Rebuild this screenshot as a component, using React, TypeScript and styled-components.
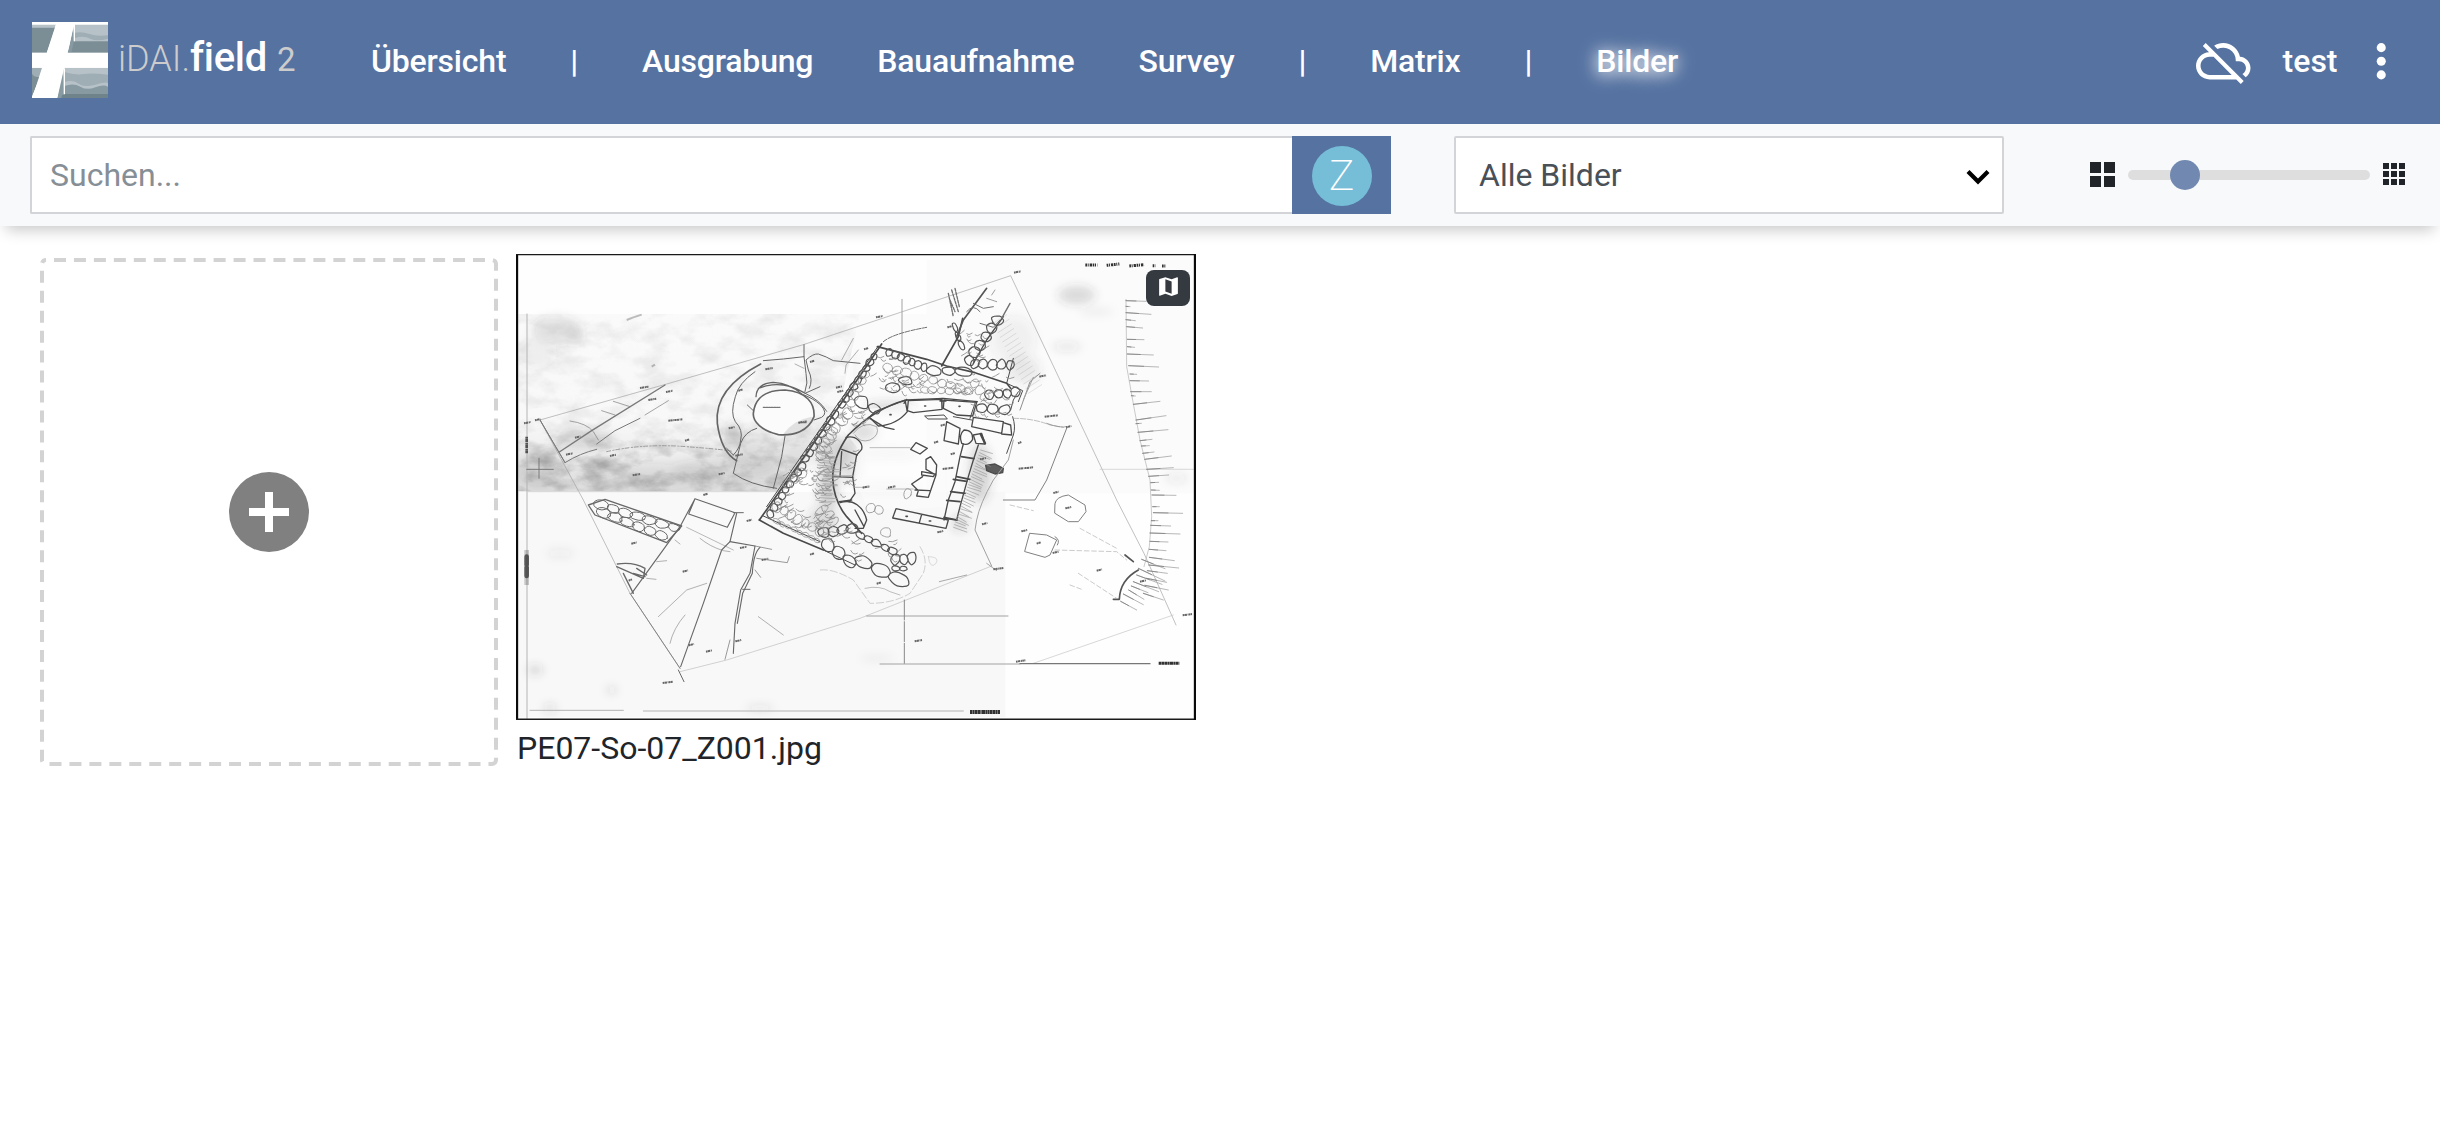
import React from 'react';
import styled, { createGlobalStyle } from 'styled-components';

const GlobalStyle = createGlobalStyle`
  * { box-sizing: border-box; }
  body {
    margin: 0;
    background: #ffffff;
    color: #212529;
    font-family: Roboto, 'Liberation Sans', sans-serif;
    font-size: 32px;
  }
`;

const Page = styled.div`
  min-height: 1148px;
  display: flex;
  flex-direction: column;
  overflow: hidden;
`;

/* ---------- navbar ---------- */

const Navbar = styled.header`
  height: 124px;
  display: flex;
  align-items: center;
  padding: 0 32px;
  background: #5572a1;
  color: #ffffff;
`;

const Brand = styled.div`
  width: 339px;
  display: flex;
  align-items: center;
  gap: 10px;
  padding-bottom: 4px;
`;

const LogoSvg = styled.svg`
  display: block;
  width: 76px;
  height: 76px;
`;

const BrandText = styled.div`
  height: 76px;
  line-height: 72px;
  white-space: nowrap;
  color: #cccccc;
`;

const BrandPart = styled.span<{ $size: number; $weight: number; $bright?: boolean; $gap?: number }>`
  font-size: ${(p) => p.$size}px;
  font-weight: ${(p) => p.$weight};
  color: ${(p) => (p.$bright ? '#ffffff' : '#cccccc')};
  margin-left: ${(p) => p.$gap ?? 0}px;
  letter-spacing: ${(p) => (p.$bright ? '-0.3px' : '0')};
  font-variant-ligatures: ${(p) => (p.$bright ? 'common-ligatures' : 'normal')};
`;

const Nav = styled.nav`
  display: flex;
  align-items: center;
  gap: 64px;
  padding-bottom: 2px;
  flex: 1;
`;

const NavItem = styled.span<{ $active?: boolean }>`
  font-size: 32px;
  font-weight: 500;
  letter-spacing: -0.2px;
  line-height: 48px;
  white-space: nowrap;
  text-shadow: ${(p) => (p.$active ? '0 2px 20px #ffffff, 0 2px 14px rgba(255,255,255,.6)' : 'none')};
`;

const NavRight = styled.div`
  display: flex;
  align-items: center;
  padding-bottom: 2px;
`;

const User = styled.span`
  font-weight: 500;
  line-height: 48px;
  margin: 0 16px 0 32px;
`;

const Icon = styled.svg<{ $size: number }>`
  display: block;
  flex: none;
  width: ${(p) => p.$size}px;
  height: ${(p) => p.$size}px;
  fill: currentColor;
`;

/* ---------- toolbar ---------- */

const Toolbar = styled.div`
  height: 102px;
  display: flex;
  align-items: center;
  padding: 0 35px 0 30px;
  background: #f8f9fb;
  box-shadow: 0 10px 14px -6px rgba(0, 0, 0, 0.22);
`;

const SearchGroup = styled.div`
  width: 1361px;
  height: 78px;
  display: flex;
`;

const SearchInput = styled.input`
  flex: 1;
  height: 78px;
  padding: 0 18px;
  border: 2px solid #d2d4d7;
  border-right: 0;
  border-radius: 2px 0 0 2px;
  background: #ffffff;
  font: 400 32px Roboto, 'Liberation Sans', sans-serif;
  outline: none;
  &::placeholder { color: #868e96; opacity: 1; }
`;

const CategoryButton = styled.button`
  width: 99px;
  height: 78px;
  display: flex;
  align-items: center;
  justify-content: center;
  padding: 0;
  border: 0;
  background: #5572a1;
`;

const CategoryBadge = styled.span`
  width: 60px;
  height: 60px;
  margin-top: 2px;
  border-radius: 50%;
  background: #76bdd7;
  color: #ffffff;
  font: 200 43px/58px Roboto, 'Liberation Sans', sans-serif;
  text-align: center;
`;

const Select = styled.div`
  width: 550px;
  height: 78px;
  margin-left: 63px;
  padding: 0 12px 0 23px;
  display: flex;
  align-items: center;
  justify-content: space-between;
  border: 2px solid #d2d4d7;
  border-radius: 2px;
  background: #ffffff;
  color: #495057;
`;

const Chevron = styled.svg`
  display: block;
  width: 24px;
  height: 16px;
  margin-top: 3px;
`;

const SizeControl = styled.div`
  flex: 1;
  display: flex;
  align-items: center;
  justify-content: flex-end;
  gap: 13px;
`;

const Tiles = styled.div<{ $columns: number; $cell: number; $gap: number }>`
  display: grid;
  grid-template-columns: repeat(${(p) => p.$columns}, ${(p) => p.$cell}px);
  grid-auto-rows: ${(p) => p.$cell}px;
  gap: ${(p) => p.$gap}px;
  margin-bottom: 2px;
`;

const Tile = styled.i`
  background: #212529;
`;

const Track = styled.div`
  width: 242px;
  height: 10px;
  border-radius: 5px;
  background: #dedede;
  display: flex;
  align-items: center;
`;

const Thumb = styled.div`
  width: 30px;
  height: 30px;
  flex: none;
  border-radius: 50%;
  background: #7189b0;
`;

/* ---------- grid ---------- */

const Grid = styled.main`
  display: flex;
  align-items: flex-start;
  padding: 28px 40px;
`;

const DropArea = styled.div`
  position: relative;
  width: 458px;
  height: 508px;
  margin: 4px 18px 0 0;
  display: flex;
  align-items: center;
  justify-content: center;
  color: #808080;
`;

const Dashes = styled.svg`
  position: absolute;
  inset: 0;
  width: 458px;
  height: 508px;
`;

const ImageCell = styled.figure`
  margin: 0;
  width: 680px;
`;

const Picture = styled.div`
  position: relative;
  height: 466px;
`;

const PlanSvg = styled.svg`
  display: block;
  width: 680px;
  height: 466px;
`;

const GeoBadge = styled.span`
  position: absolute;
  top: 16px;
  right: 6px;
  width: 44px;
  height: 36px;
  display: flex;
  align-items: center;
  justify-content: center;
  padding-bottom: 3px;
  border-radius: 8px;
  background: #343a40;
  color: #ffffff;
`;

const Caption = styled.figcaption`
  padding: 4px 0 0 1px;
  line-height: 48px;
`;

/* ---------- drawings ---------- */

const Logo = () => (
  <LogoSvg viewBox="0 0 228 228">
    <rect width="228" height="228" fill="#ffffff" />
    <path d="M0 8H72L44 92H0z" fill="#b7c2c8" />
    <path d="M0 17H70L44 92H0z" fill="#7b8e96" />
    <path d="M129 8H228V92H106z" fill="#b7c2c8" />
    <path d="M129 32Q150 28 172 36T228 40V92H108z" fill="#9fadb4" />
    <path d="M129 48Q155 40 175 50T228 50V92H108z" fill="#b7c2c8" />
    <path d="M122 58H228V92H106z" fill="#7b8e96" />
    <path d="M124 12L108 92H118L126 58z" fill="#8799a1" />
    <path d="M127 8V58" stroke="#ffffff" strokeWidth="4" />
    <path d="M0 137H33L0 222z" fill="#9fadb4" />
    <path d="M0 155Q8 168 24 164L0 222z" fill="#7b8e96" />
    <path d="M92 137H228V228H76z" fill="#b7c2c8" />
    <path d="M97 150Q130 160 155 156T228 158V228H76z" fill="#9fadb4" />
    <path d="M97 180Q125 172 140 185T190 188T228 184V228H76z" fill="#b7c2c8" />
    <path d="M97 192Q125 182 145 194T190 196T228 194V228H76z" fill="#8799a1" />
    <path d="M97 216H228V228H76z" fill="#6f838b" />
    <path d="M92 142L76 228H88L96 200z" fill="#8799a1" />
    <path d="M97 139V217" stroke="#ffffff" strokeWidth="4" />
    <path d="M0 92H228V137H0z" fill="#ffffff" />
    <path d="M74 0H128L76 228H1z" fill="#ffffff" />
  </LogoSvg>
);

type Point = [number, number];

const noise = (seed: number) => {
  const v = Math.sin(seed * 127.1 + 11.7) * 43758.5453;
  return v - Math.floor(v);
};

/* A row of rough stones laid along the line from a to b. */
const stoneRow = (a: Point, b: Point, count: number, depth: number, seed: number) => {
  const ux = (b[0] - a[0]) / count;
  const uy = (b[1] - a[1]) / count;
  const len = Math.hypot(ux, uy);
  const nx = -uy / len;
  const ny = ux / len;
  let d = '';
  for (let i = 0; i < count; i++) {
    const cx = a[0] + ux * (i + 0.5);
    const cy = a[1] + uy * (i + 0.5);
    const pts: Point[] = [];
    const sides = 5 + Math.floor(noise(seed + i) * 3);
    for (let k = 0; k < sides; k++) {
      const t = (k / sides) * Math.PI * 2 + noise(seed * 3 + i);
      const r = 0.85 + 0.5 * noise(seed + i * 9 + k * 2.3);
      const p = Math.cos(t) * r * 0.55;
      const q = Math.sin(t) * r * 0.5 * depth;
      pts.push([cx + ux * p + nx * q, cy + uy * p + ny * q]);
    }
    const mid = (m: Point, n: Point) => `${(m[0] * 0.35 + n[0] * 0.65).toFixed(1)} ${(m[1] * 0.35 + n[1] * 0.65).toFixed(1)}`;
    d += `M${mid(pts[sides - 1], pts[0])}`;
    pts.forEach((p, k) => {
      d += `Q${p[0].toFixed(1)} ${p[1].toFixed(1)} ${mid(p, pts[(k + 1) % sides])}`;
    });
    d += 'Z';
  }
  return d;
};

/* Broken, wandering pen scratches filling the box x, y, w, h. */
const rubble = (x: number, y: number, w: number, h: number, count: number, seed: number) =>
  Array.from({ length: count }, (_, i) => {
    const s = seed + i * 5.1;
    const px = x + noise(s) * w;
    const py = y + noise(s + 1) * h;
    const dx = 8 + noise(s + 2) * 18;
    const dy = (noise(s + 3) - 0.5) * 26;
    return `M${px.toFixed(1)} ${py.toFixed(1)}q${(dx * 0.4).toFixed(1)} ${(dy + 8).toFixed(1)} ${dx.toFixed(1)} ${dy.toFixed(1)}`;
  }).join('');

/* Short strokes fanning off the scarp at the right edge of the sheet: x, y, length, slope. */
const SCARP: [number, number, number, number][] = [
  [858, 182, 60, 2], [858, 199, 12, 1], [858, 218, 75, 5], [858, 239, 28, 3], [860, 260, 48, 4],
  [862, 298, 50, 1], [862, 320, 22, 2], [862, 342, 78, 3], [866, 377, 90, 4], [870, 402, 20, 1],
  [870, 422, 56, 1], [872, 455, 62, 0], [874, 467, 12, 1], [880, 493, 80, -9], [888, 540, 90, -13],
  [888, 551, 16, -1], [894, 577, 90, -8], [900, 602, 36, -4], [904, 618, 24, -1], [908, 640, 34, -4],
  [914, 658, 80, -10], [920, 688, 80, -5], [926, 709, 60, -4], [932, 728, 24, -1], [934, 750, 24, 1],
  [936, 765, 72, 1], [938, 800, 20, 0], [940, 818, 88, 2], [934, 842, 20, 0], [932, 856, 60, 2],
  [930, 879, 90, 3], [930, 904, 54, 2], [928, 928, 50, 4], [928, 952, 75, 10], [926, 975, 90, 9],
  [922, 992, 60, 8], [920, 1015, 60, 12], [915, 1036, 70, 14], [905, 958, 70, 28], [910, 1060, 60, 20],
  [895, 985, 80, 38], [890, 1005, 76, 28], [880, 1025, 76, 30], [874, 1038, 50, 20], [866, 1050, 46, 28],
  [850, 1062, 60, 32], [842, 1084, 48, 26],
];

/* Tiny measured heights written all over the sheet: x, y, length. */
const NOTES: [number, number, number][] = [
  [72, 550, 20], [105, 541, 16], [498, 456, 20], [445, 480, 24], [420, 444, 26], [505, 542, 42],
  [555, 602, 14], [198, 644, 20], [330, 648, 18], [398, 706, 22], [656, 703, 18], [796, 388, 22],
  [715, 452, 14], [895, 548, 26], [930, 366, 14], [1008, 443, 18], [686, 565, 18], [706, 647, 22],
  [225, 593, 16], [1542, 98, 20], [1128, 232, 20], [1092, 328, 14], [1342, 262, 16],
  [1618, 410, 20], [1698, 562, 16], [1554, 610, 10], [1634, 530, 40], [1556, 686, 44], [1302, 608, 14],
  [1352, 643, 14], [1440, 658, 18], [1328, 687, 34], [1088, 743, 20], [1164, 743, 22], [394, 911, 16],
  [548, 995, 16], [720, 924, 20], [785, 960, 20], [566, 1216, 16], [618, 1235, 18], [488, 1329, 30],
  [706, 1204, 18], [610, 765, 14], [386, 1022, 10], [740, 843, 16], [930, 944, 12], [1130, 1031, 14],
  [1446, 853, 16], [1564, 874, 18], [1312, 877, 18], [1660, 759, 16], [1696, 805, 18],
  [1610, 911, 12], [1658, 939, 18], [1790, 992, 16], [1920, 1025, 18], [1480, 988, 30], [2048, 1126, 28],
  [1548, 1265, 28], [1244, 1204, 22], [1322, 557, 14], [1012, 456, 18],
];

/* Stains in the paper: cx, cy, rx, ry, opacity. */
const PLAN_BLOTS: [number, number, number, number, number][] = [
  [170, 270, 90, 50, 0.13], [230, 295, 24, 16, 0.18], [110, 340, 70, 60, 0.06], [120, 690, 90, 70, 0.14],
  [250, 600, 110, 34, 0.14], [430, 710, 240, 50, 0.07], [690, 690, 200, 50, 0.09], [770, 640, 80, 60, 0.1],
  [910, 640, 80, 60, 0.08], [895, 540, 44, 24, 0.22], [700, 580, 24, 40, 0.2], [1090, 575, 44, 36, 0.4],
  [1000, 640, 50, 70, 0.2], [1170, 500, 90, 14, 0.26], [1730, 165, 66, 34, 0.17], [1790, 215, 60, 10, 0.08],
  [1700, 320, 50, 12, 0.14], [1570, 390, 60, 50, 0.1], [1440, 700, 40, 110, 0.2], [1540, 300, 80, 90, 0.06],
  [985, 740, 36, 80, 0.24], [1050, 660, 34, 90, 0.16], [1160, 640, 110, 14, 0.12], [1160, 745, 110, 12, 0.12],
  [1380, 850, 30, 30, 0.16], [970, 840, 50, 50, 0.16], [105, 1290, 26, 14, 0.22], [335, 1350, 18, 10, 0.18],
  [180, 940, 50, 18, 0.06], [150, 1405, 20, 14, 0.18], [780, 1405, 50, 10, 0.12],
  [2030, 715, 40, 12, 0.12], [1130, 1255, 60, 8, 0.08], [1060, 400, 10, 80, 0.05],
];

const WALL_STONES = [
  stoneRow([408, 100], [300, 262], 9, 22, 3),
  stoneRow([290, 275], [190, 425], 8, 24, 21),
  stoneRow([190, 430], [85, 590], 9, 22, 26),
  stoneRow([345, 235], [420, 275], 2, 34, 29),
  stoneRow([440, 95], [560, 145], 7, 24, 5),
  stoneRow([560, 150], [690, 158], 3, 26, 8),
  stoneRow([440, 205], [475, 205], 1, 30, 13),
  stoneRow([480, 180], [512, 185], 1, 24, 14),
  stoneRow([680, 135], [780, -10], 6, 34, 17),
  stoneRow([690, 130], [825, 135], 5, 30, 31),
  stoneRow([735, 225], [840, 215], 4, 30, 44),
  stoneRow([710, 265], [810, 270], 3, 30, 45),
  stoneRow([640, 10], [670, 90], 3, 14, 46),
  stoneRow([250, 665], [345, 735], 3, 36, 71),
  stoneRow([345, 715], [505, 790], 3, 38, 73),
  stoneRow([350, 640], [470, 700], 5, 20, 77),
  stoneRow([455, 720], [528, 715], 3, 34, 81),
  stoneRow([455, 745], [500, 745], 2, 16, 83),
  stoneRow([235, 640], [350, 625], 4, 30, 85),
].join('');

const FINE_STONES = [
  stoneRow([430, 140], [700, 215], 10, 26, 101),
  stoneRow([540, 210], [690, 215], 6, 20, 104),
  stoneRow([380, 150], [330, 260], 5, 30, 107),
  stoneRow([330, 270], [230, 400], 6, 34, 111),
  stoneRow([100, 555], [250, 640], 7, 30, 117),
  stoneRow([100, 600], [240, 665], 8, 14, 119),
  stoneRow([130, 500], [200, 450], 3, 34, 121),
  stoneRow([240, 560], [280, 620], 3, 50, 123),
  stoneRow([700, 180], [740, 240], 3, 30, 127),
  stoneRow([380, 560], [430, 575], 2, 28, 131),
  stoneRow([425, 635], [452, 640], 1, 28, 133),
  stoneRow([490, 520], [515, 520], 1, 34, 135),
  stoneRow([280, 320], [240, 420], 4, 34, 141),
].join('');

const RUBBLE = [
  rubble(390, 110, 100, 110, 22, 1),
  rubble(480, 170, 220, 50, 26, 40),
  rubble(290, 260, 90, 60, 20, 80),
  rubble(215, 370, 60, 150, 34, 120),
  rubble(120, 440, 150, 120, 26, 160),
  rubble(110, 560, 150, 60, 22, 200),
  rubble(220, 590, 100, 70, 22, 240),
  rubble(690, 160, 130, 130, 26, 280),
  rubble(650, 30, 90, 90, 14, 320),
  rubble(330, 660, 140, 60, 12, 360),
  rubble(300, 380, 40, 150, 12, 400),
].join('');

const TRENCH_STONES = [
  stoneRow([285, 788], [540, 868], 7, 26, 91),
  stoneRow([290, 812], [505, 895], 6, 28, 94),
].join('');

const SitePlan = () => (
  <PlanSvg viewBox="48 42 2040 1398" fill="none" strokeLinecap="round" strokeLinejoin="round">
    <defs>
      <filter id="smudge" x="-10%" y="-10%" width="120%" height="120%">
        <feGaussianBlur stdDeviation="14" />
      </filter>
      <filter id="soft" x="-2%" y="-2%" width="104%" height="104%">
        <feGaussianBlur stdDeviation="1.6" />
      </filter>
      <filter id="mottle" x="0" y="0" width="100%" height="100%">
        <feTurbulence type="fractalNoise" baseFrequency="0.012 0.02" numOctaves="4" seed="7" />
        <feColorMatrix values="0 0 0 0 .35  0 0 0 0 .35  0 0 0 0 .35  1.9 0 0 0 -.78" />
      </filter>
      <linearGradient id="wash" x1="0" y1="0" x2="0" y2="1">
        <stop offset="0" stopColor="#fafafa" />
        <stop offset=".6" stopColor="#f8f8f8" />
        <stop offset=".82" stopColor="#ececec" />
        <stop offset="1" stopColor="#dfdfdf" />
      </linearGradient>
      <linearGradient id="fade" x1="0" y1="0" x2="0" y2="1">
        <stop offset="0" stopColor="#ffffff" stopOpacity=".22" />
        <stop offset=".6" stopColor="#ffffff" stopOpacity=".25" />
        <stop offset=".85" stopColor="#ffffff" stopOpacity=".9" />
        <stop offset="1" stopColor="#ffffff" stopOpacity=".9" />
      </linearGradient>
      <mask id="washMask"><path d="M55 222H1080L1020 495L850 754H55z" fill="url(#fade)" /></mask>
      <clipPath id="sheet"><rect x="48" y="42" width="2040" height="1398" /></clipPath>
    </defs>
    <g clipPath="url(#sheet)">
      <rect x="48" y="42" width="2040" height="1398" fill="#fefefe" />
      <rect x="1280" y="60" width="800" height="700" fill="#fbfbfb" />
      <path d="M55 222H1080L1020 495L850 754H55z" fill="url(#wash)" />
      <rect x="1060" y="222" width="260" height="260" fill="#fbfbfb" />
      <rect x="56" y="756" width="1460" height="676" fill="#f8f8f8" />
      <g mask="url(#washMask)">
        <rect x="55" y="222" width="1030" height="532" filter="url(#mottle)" />
      </g>
      <g filter="url(#smudge)" fill="#444444">
        {PLAN_BLOTS.map(([x, y, rx, ry, o], i) => (
          <ellipse key={i} cx={x} cy={y} rx={rx * 0.85} ry={ry * 0.8} opacity={o} />
        ))}
      </g>
      <path d="M56 756H850L780 842L900 900H56z" fill="#f9f9f9" />
      <g filter="url(#soft)">
        {/* kiln floor */}
        <ellipse cx="850" cy="518" rx="92" ry="66" fill="#fbfbfb" />
        <path d="M935 545Q900 588 850 582Q880 540 935 530z" fill="#d5d5d5" opacity=".7" />

        {/* survey lines */}
        <g stroke="#a2a2a2" strokeWidth="2">
          <path d="M120 540L500 432L910 314L1532 107L1850 780L1932 940L2028 1155" />
          <path d="M120 540L250 780L390 1060L540 1285" />
          <path d="M120 540L195 668M390 1060L540 1285" stroke="#858585" strokeWidth="3" />
          <path d="M540 1295L680 1260L1080 1135L1475 978" stroke="#bdbdbd" />
          <path d="M2020 1125L1600 1270" stroke="#c4c4c4" />
          <path d="M81 222V1435M90 1411H370M430 1413H1390" strokeWidth="3" stroke="#b4b4b4" />
          <path d="M1206 178V340M1100 1128H1524M1140 1272H1560" strokeWidth="3" />
          <path d="M1560 1271H1950" stroke="#777777" strokeWidth="4" />
          <path d="M1213 1080V1270" stroke="#888888" strokeWidth="3" strokeDasharray="60 5" />
          <path d="M1800 688H2080M84 755H840" stroke="#c8c8c8" />
          <path d="M560 862L700 930" stroke="#999999" />
        </g>

        {/* west trench */}
        <g stroke="#787878" strokeWidth="3">
          <path d="M495 435L275 572L178 636" strokeWidth="4" />
          <path d="M120 540L195 668Q240 640 290 628M290 612L345 572L420 535" />
          <path d="M340 484L390 500M305 512L345 525M210 543Q260 550 280 575L295 600M435 525L505 482" strokeWidth="2" />
          <path d="M320 635Q430 610 560 620T700 635" stroke="#9a9a9a" strokeDasharray="12 7 4 5" />
          <path d="M117 655V715M80 688H160" strokeWidth="3" />
        </g>

        {/* round kiln with its enclosing arc */}
        <g stroke="#656565" strokeWidth="4">
          <path d="M782 372C690 420 645 480 652 550C660 610 680 645 710 662" strokeWidth="5" />
          <path d="M765 395Q715 430 706 470Q690 520 706 545Q730 570 722 600Q720 625 700 645" strokeWidth="3" />
          <path d="M760 520C765 470 800 450 855 450C920 455 945 490 942 530C925 575 880 588 835 584C785 572 758 545 760 520z" strokeWidth="5" />
          <path d="M768 470Q770 430 820 427Q870 430 905 462M775 445Q810 430 850 435Q880 440 912 458" strokeWidth="4" />
          <path d="M905 462Q940 475 962 495Q985 520 965 532L942 540M912 458Q960 480 980 514" strokeWidth="3" />
          <path d="M912 314V350L918 400Q925 430 915 455M928 445Q940 420 925 390L918 360Q940 340 955 342Q980 350 1000 362L1080 370M912 350Q850 358 790 362" strokeWidth="3" />
          <path d="M915 460L960 440M770 565Q735 575 722 610L700 700Q750 735 830 745M855 588L845 650L820 745M700 645L680 625M742 495L760 512" strokeWidth="3" />
          <path d="M885 372L912 385M1060 295L1025 360M1075 330L1038 375L1035 400" strokeWidth="2" stroke="#888888" />
          <path d="M790 502H840M898 548H918" strokeWidth="4" strokeDasharray="5 3" stroke="#777777" />
        </g>

        {/* main building */}
        <g transform="translate(720 240)" stroke="#4a4a4a" strokeWidth="4">
          <path d="M300 320L370 270L500 250L620 290V560L460 570L380 560L345 480L350 380z" fill="#fcfcfc" stroke="none" opacity=".6" />
          <path d="M425 72L300 255L200 400L58 600" strokeWidth="5" />
          <path d="M415 78L190 400L80 560" strokeWidth="3" />
          <path d="M412 80L560 118L620 138L705 158L800 190L812 205" strokeWidth="5" />
          <path d="M668 -5L655 50L605 138" strokeWidth="5" />
          <path d="M790 -10L740 60L700 130" />
          <path d="M58 600L130 640L250 690" strokeWidth="5" />
          <path d="M70 588L240 665M250 690L345 735" strokeWidth="3" />

          <path d="M500 240C440 255 380 290 325 345C290 395 278 440 278 475C280 520 295 560 320 590L365 640" strokeWidth="5" />
          <path d="M500 240L610 235L712 245" />
          <path d="M318 352C350 345 370 370 365 388L350 405L338 470L345 520L328 545" />
          <path d="M305 388L352 405M280 470L338 472M298 545L335 540M305 395L300 470" />
          <path d="M300 548C340 535 370 560 380 600L370 625L345 625M345 570L372 620" />
          <path d="M388 292L405 275L495 240L502 275Q470 315 415 318z" />
          <path d="M385 292L435 322L462 328M500 238L492 250" />
          <path d="M505 242L605 238L606 268L520 278L502 272zM612 240L710 247L698 288L650 285L610 265zM600 243H618M606 235V268" strokeWidth="4" />
          <path d="M555 288L612 285L622 297L565 297zM640 290L695 300M690 295L705 250" strokeWidth="3" />
          <path d="M700 292L790 305L785 340L695 320zM790 308L812 315L815 345L785 342" />
          <path d="M818 290Q828 320 820 345L800 400" strokeWidth="3" />
          <path d="M620 305L612 362L655 372L660 325zM672 330Q700 330 698 358Q685 380 665 370Q655 345 672 330z" />
          <path d="M700 345L725 340L735 372L708 370z" fill="#fafafa" />
          <path d="M722 342L735 370" strokeWidth="7" />
          <path d="M670 372L660 410L645 485L625 540L612 600M715 375L700 420L685 470L660 560L650 600L612 595" />
          <path d="M664 410L702 416M650 470L690 478M640 478L680 484M632 515L675 520M620 541L660 545M612 592L652 600" strokeWidth="5" />
          <path d="M737 436L765 432L790 445L788 458L765 462L740 452z" fill="#5c5c5c" />
          <path d="M528 368L562 385L540 402L512 388z" />
          <path d="M558 418L572 410L590 435L588 465L558 448zM545 455L585 462L580 470L545 465zM548 470L515 492L535 512L530 528L565 532L588 465M525 510L570 512" />
          <path d="M468 566L625 600L618 625L458 594zM545 583L538 608" />
          <path d="M498 589H502M568 603H572M554 258H557M657 259H660M450 284H453" strokeWidth="5" />
          <path d="M800 190L848 212L835 245M820 115L800 190M835 215L820 240L812 270" strokeWidth="3" />
          <path d={WALL_STONES} strokeWidth="3.6" stroke="#555555" />
          <path d={FINE_STONES} strokeWidth="2.4" stroke="#909090" />
          <path d={RUBBLE} strokeWidth="2.4" stroke="#868686" />
          <path d="M390 383H510M340 502H385M440 507H520M250 467H340" strokeWidth="2" stroke="#9c9c9c" />
          <path d="M340 340Q370 300 410 320Q420 345 390 360Q360 370 345 345" strokeWidth="2" stroke="#858585" />
          <g stroke="#9a9a9a" strokeWidth="2">
            {Array.from({ length: 30 }, (_, i) => (
              <path key={i} d={`M${722 - i * 2.8} ${390 + i * 8}l${24 + noise(i) * 16} ${10 + noise(i + 3) * 8}`} />
            ))}
            {Array.from({ length: 22 }, (_, i) => (
              <path key={i} d={`M${225 + noise(i) * 30} ${400 + i * 7}l${24 + noise(i + 5) * 30} ${-3 + noise(i + 9) * 8}`} />
            ))}
          </g>
        </g>

        <g stroke="#6e6e6e" strokeWidth="3">
          <path d="M1345 160L1360 230M1355 150L1375 215M1365 145L1378 200M1350 180L1365 215" strokeDasharray="8 4" strokeWidth="4" />
          <path d="M1150 305Q1180 280 1280 262" strokeWidth="3" strokeDasharray="14 4" />
          <path d="M1460 145L1390 240L1370 290" strokeWidth="5" stroke="#555555" />
          <path d="M1530 190L1505 235" strokeWidth="4" />
          <path d="M1420 190L1450 205L1480 200M1400 215Q1420 190 1440 215M1440 250L1480 262L1500 240" />
          <path d="M1485 150L1475 165M1460 175L1490 185" strokeWidth="2" />
          <path d="M1620 400L1590 425L1560 510" stroke="#8e8e8e" />
          <path d="M1600 412L1570 480" stroke="#a0a0a0" />
          <path d="M1540 600L1525 660L1480 720Q1440 790 1430 840L1425 870L1475 978" stroke="#a0a0a0" />
        </g>
        <g stroke="#8f8f8f" strokeWidth="2" opacity=".35">
          {Array.from({ length: 16 }, (_, i) => (
            <path key={i} d={`M${1480 + i * 7} ${250 + i * 14}l40 -26`} />
          ))}
        </g>

        {/* south-west walls */}
        <g stroke="#686868" strokeWidth="4">
          <path d="M265 795L315 778L545 858L500 908L285 825z" />
          <path d={TRENCH_STONES} strokeWidth="3" />
          <path d="M585 776L705 818L682 862L566 822zM585 776L540 860L395 1060" strokeWidth="3.4" />
          <path d="M352 972Q400 965 435 985L430 1015L350 980M370 1000L400 1060M410 985L440 1005M400 1000L435 1010" />
          <path d="M710 820L690 905L665 930L610 1090L542 1280" strokeWidth="3.4" />
          <path d="M690 905L765 918L750 1000L722 1050L705 1150L700 1240M780 922Q760 940 757 1000L728 1060L712 1150" strokeWidth="3.4" />
          <path d="M690 1200L675 1258M765 918L815 928M770 955L862 968L868 950M765 990L782 1012" strokeWidth="2" />
          <path d="M600 895Q630 920 670 932L690 935M475 1130L560 1050L620 1030M555 1125Q520 1165 510 1210M775 1130L850 1185M525 900L540 912M470 965L500 962M440 1015L468 1018" strokeWidth="2" stroke="#8d8d8d" />
          <path d="M535 1290L552 1325M700 818L730 818M728 1048H750" strokeWidth="3" />
        </g>

        {/* single finds east of the building */}
        <g stroke="#808080" strokeWidth="3">
          <path d="M1665 790Q1668 770 1705 765L1755 795L1758 815L1735 845L1705 845L1665 820z" />
          <path d="M1590 880L1640 885L1670 900L1650 945L1635 952L1575 935zM1665 890Q1682 900 1672 915" />
          <path d="M1700 565L1640 720L1605 780H1510" strokeWidth="3" />
          <path d="M1540 535Q1600 535 1650 555L1690 562" stroke="#a0a0a0" strokeWidth="2" strokeDasharray="16 5" />
          <path d="M1640 550Q1680 565 1700 560" strokeWidth="2" />
          <path d="M1915 990Q1860 1020 1858 1078L1840 1078M1875 945L1900 965" strokeWidth="5" stroke="#555555" />
          <path d="M1735 1000L1850 1075M1710 1035L1745 1048M1665 930L1850 935L1880 960M1740 865L1850 925M1530 795L1600 812" strokeWidth="2" stroke="#b0b0b0" strokeDasharray="14 8" />
          <path d="M1260 920Q1285 960 1270 1000L1230 1060Q1180 1090 1110 1090L1060 1020Q1000 985 960 990" stroke="#bababa" strokeWidth="2" strokeDasharray="22 8" />
          <path d="M1095 1045Q1140 1035 1170 1055L1200 1065" stroke="#9e9e9e" strokeWidth="2" />
          <path d="M1285 950Q1320 950 1308 970Q1290 990 1285 950" stroke="#cccccc" strokeWidth="2" />
          <path d="M1318 1025L1400 1005M1460 970L1490 992" strokeWidth="2" />
        </g>
        <path d="M1878 178L1880 380L1898 480L1920 600L1950 720L1955 830L1948 920L1932 980" stroke="#b0b0b0" strokeWidth="2" />
        <path
          d={SCARP.map(([x, y, l, s]) => `M${x + 1020} ${y}l${l} ${s}`).join('')}
          stroke="#a4a4a4"
          strokeWidth="2.4"
        />
        <path
          d={SCARP.map(([x, y, l, s]) => `M${x + 1020} ${y}l${l * 0.5} ${s * 0.5}`).join('')}
          stroke="#808080"
          strokeWidth="2.4"
        />
        <path
          d={NOTES.map(([x, y, l]) => `M${x} ${y}l${l} -4`).join('')}
          stroke="#666666"
          strokeWidth="6"
          strokeLinecap="butt"
          strokeDasharray="5 1 7 2 3 1"
        />
        <g stroke="#333333" strokeLinecap="butt">
          <path d="M1756 75H1792M1820 76L1858 72M1888 78L1932 74M1958 77H1966M1986 78H1998" strokeWidth="9" strokeDasharray="5 2 3 3 7 2" />
          <path d="M1410 1416H1500" strokeWidth="12" strokeDasharray="7 1 4 1 9 1" />
          <path d="M1976 1270H2038" strokeWidth="9" strokeDasharray="9 1 6 1" />
          <path d="M80 590V640" strokeWidth="8" strokeDasharray="6 1 9 2" opacity=".8" />
          <path d="M80 950V975M80 982V1008" strokeWidth="14" opacity=".75" strokeLinecap="round" />
          <path d="M80 930V1035" strokeWidth="14" opacity=".25" />
          <path d="M380 240L400 232L425 224M455 380L465 374" strokeWidth="6" opacity=".3" />
        </g>
      </g>
      <path d="M51 42V1440" stroke="#0a0a0a" strokeWidth="7" />
      <path d="M48 43H2088" stroke="#1a1a1a" strokeWidth="5" />
      <path d="M48 1438H2088" stroke="#1a1a1a" strokeWidth="5" />
      <path d="M2085 42V1440" stroke="#0a0a0a" strokeWidth="7" />
    </g>
  </PlanSvg>
);

/* ---------- app ---------- */

const NAV = ['Übersicht', '|', 'Ausgrabung', 'Bauaufnahme', 'Survey', '|', 'Matrix', '|', 'Bilder'];
const SLIDER_OFFSET = 42;

export default function App() {
  return (
    <Page>
      <GlobalStyle />
      <Navbar>
        <Brand>
          <Logo />
          <BrandText>
            <BrandPart $size={36} $weight={300}>iDAI.</BrandPart>
            <BrandPart $size={40} $weight={500} $bright>field</BrandPart>
            <BrandPart $size={33} $weight={400} $gap={10}>2</BrandPart>
          </BrandText>
        </Brand>
        <Nav>
          {NAV.map((label, i) => (
            <NavItem key={i} $active={label === 'Bilder'}>{label}</NavItem>
          ))}
        </Nav>
        <NavRight>
          <Icon $size={54.5} viewBox="0 0 24 24">
            <path d="M19.35 10.04A7.49 7.49 0 0 0 12 4c-1.48 0-2.85.43-4.01 1.17l1.46 1.46a5.497 5.497 0 0 1 8.05 4.87v.5H19c1.66 0 3 1.34 3 3 0 1.13-.64 2.11-1.56 2.62l1.45 1.45C23.16 18.16 24 16.68 24 15c0-2.64-2.05-4.78-4.65-4.96zM3 5.27l2.75 2.74C2.56 8.15 0 10.77 0 14c0 3.31 2.69 6 6 6h11.73l2 2L21 20.73 4.27 4 3 5.27zM7.73 10l8 8H6c-2.21 0-4-1.79-4-4s1.79-4 4-4h1.73z" />
          </Icon>
          <User>test</User>
          <Icon $size={54.5} viewBox="0 0 24 24">
            <circle cx="12" cy="6" r="2" />
            <circle cx="12" cy="12" r="2" />
            <circle cx="12" cy="18" r="2" />
          </Icon>
        </NavRight>
      </Navbar>

      <Toolbar>
        <SearchGroup>
          <SearchInput placeholder="Suchen..." />
          <CategoryButton>
            <CategoryBadge>Z</CategoryBadge>
          </CategoryButton>
        </SearchGroup>
        <Select>
          Alle Bilder
          <Chevron viewBox="0 0 24 16">
            <path d="M2 2.5L12 12.5L22 2.5" fill="none" stroke="#000000" strokeWidth="4.2" />
          </Chevron>
        </Select>
        <SizeControl>
          <Tiles $columns={2} $cell={11} $gap={3}>
            {Array.from({ length: 4 }, (_, i) => <Tile key={i} />)}
          </Tiles>
          <Track>
            <Thumb style={{ marginLeft: SLIDER_OFFSET }} />
          </Track>
          <Tiles $columns={3} $cell={6} $gap={2}>
            {Array.from({ length: 9 }, (_, i) => <Tile key={i} />)}
          </Tiles>
        </SizeControl>
      </Toolbar>

      <Grid>
        <DropArea>
          <Dashes viewBox="0 0 458 508">
            <rect
              x="2" y="2" width="454" height="504" rx="4"
              fill="none" stroke="#d3d3d3" strokeWidth="4"
              strokeDasharray="12 7.953" strokeDashoffset="-8"
            />
          </Dashes>
          <Icon $size={96} viewBox="0 0 24 24">
            <path d="M17 13h-4v4h-2v-4H7v-2h4V7h2v4h4m-5-9A10 10 0 0 0 2 12a10 10 0 0 0 10 10 10 10 0 0 0 10-10A10 10 0 0 0 12 2z" />
          </Icon>
        </DropArea>
        <ImageCell>
          <Picture>
            <SitePlan />
            <GeoBadge>
              <Icon $size={25} viewBox="0 0 24 24">
                <path d="M20.5 3l-.16.03L15 5.1 9 3 3.36 4.9c-.21.07-.36.25-.36.48V20.5c0 .28.22.5.5.5l.16-.03L9 18.9l6 2.1 5.64-1.9c.21-.07.36-.25.36-.48V3.5c0-.28-.22-.5-.5-.5zM15 19l-6-2.11V5l6 2.11V19z" />
              </Icon>
            </GeoBadge>
          </Picture>
          <Caption>PE07-So-07_Z001.jpg</Caption>
        </ImageCell>
      </Grid>
    </Page>
  );
}
